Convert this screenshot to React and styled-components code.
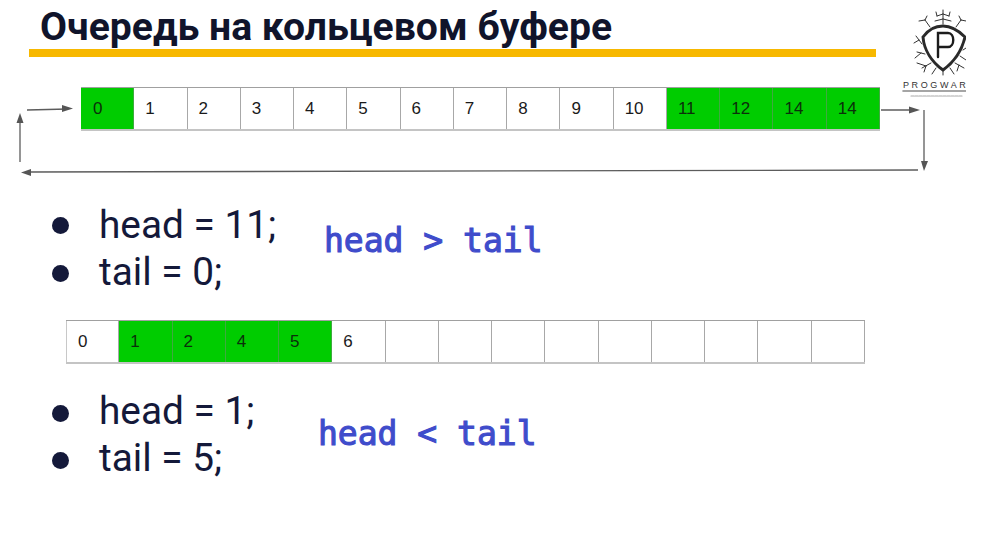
import React from "react";
import styled, { createGlobalStyle } from "styled-components";

const Global = createGlobalStyle`
  html, body { margin: 0; padding: 0; background: #fff; }
  #root { width: 1000px; height: 550px; overflow: hidden; }
`;

const Page = styled.div`
  position: relative;
  width: 1000px;
  height: 550px;
  background: #fff;
  display: flex;
  flex-direction: column;
  box-sizing: border-box;
  padding-top: 6px;
  color: #14193a;
  font-family: Roboto, "Noto Sans", sans-serif;
`;

const Title = styled.h1`
  margin: 0 0 0 40px;
  height: 43px;
  line-height: 43px;
  font-size: 39.15px;
  font-weight: 700;
  color: #10142b;
  white-space: nowrap;
`;

const Rule = styled.div`
  margin-left: 29px;
  width: 847px;
  height: 8px;
  background: #f7b800;
`;

const Buffer = styled.div`
  display: grid;
  grid-template-columns: repeat(15, 1fr);
  width: 799px;
  height: 44px;
  box-sizing: border-box;
  margin-left: ${(p) => p.$left}px;
  margin-top: ${(p) => p.$top}px;
  border-top: 1px solid #a0a0a0;
  border-bottom: 2px solid #c4c4c4;
`;

const Cell = styled.div`
  display: flex;
  align-items: center;
  padding-left: 11px;
  box-sizing: border-box;
  background: ${(p) => (p.$on ? "#00cc00" : "#fff")};
  border-right: 1px solid ${(p) => (p.$on ? "#3faa3f" : "#a8a8a8")};
  &:first-child {
    border-left: 1px solid ${(p) => (p.$on ? "#00cc00" : "#c8c8c8")};
  }
  font-family: "Liberation Sans", Arial, sans-serif;
  font-size: 17px;
  color: ${(p) => (p.$on ? "#0b2f0b" : "#1a1a1a")};
`;

const Row = styled.div`
  display: flex;
  align-items: flex-start;
  margin-top: ${(p) => p.$top}px;
`;

const Vars = styled.ul`
  list-style: none;
  margin: 0 0 0 52px;
  padding: 0;
  width: ${(p) => p.$width}px;
  flex: none;
`;

const Var = styled.li`
  display: flex;
  align-items: center;
  height: 47px;
  font-size: 38.8px;
  font-weight: 400;
  color: #14193a;
  white-space: nowrap;
  &::before {
    content: "";
    width: 17px;
    height: 17px;
    border-radius: 50%;
    background: #14193a;
    margin-right: 30px;
    flex: none;
    transform: translateY(${(p) => p.$drop}px);
  }
`;

const Compare = styled.div`
  margin-top: ${(p) => p.$top}px;
  font-family: "DejaVu Sans Mono", monospace;
  font-size: 33px;
  font-weight: 400;
  -webkit-text-stroke: 1.1px #3f4ccb;
  line-height: 40px;
  color: #3f4ccb;
  white-space: pre;
`;

const Overlay = styled.svg`
  position: absolute;
  left: 0;
  top: 0;
  pointer-events: none;
`;

const LogoText = styled.div`
  position: absolute;
  left: 903px;
  top: 80px;
  font-family: "Liberation Sans", Arial, sans-serif;
  font-size: 9px;
  letter-spacing: 2.6px;
  line-height: 10px;
  color: #333;
  white-space: nowrap;
`;

const first = [0,1,2,3,4,5,6,7,8,9,10,11,12,14,14];
const second = [0,1,2,4,5,6,"","","","","","","","",""];

function Logo() {
  return (
    <Overlay width="966" height="105" viewBox="0 0 966 105" fill="none" stroke="#333" strokeLinecap="round">
      <path d="M943 26C934 26 928 30 923 37C924 50 932 62 943 70C954 62 962 50 965 37C958 30 952 26 943 26Z" strokeWidth="3" stroke="#2a2a2a"/>
      <path d="M938 57V33H948C955 33 955 47 948 47H939" strokeWidth="2.4" stroke="#1c1c1c"/>
      <path d="M943 10V24M943 14L937 16M943 14L949 16M943 19L935 21M943 19L951 21M937 16L936 12M949 16L950 12" strokeWidth="1"/>
      <path d="M930 27L925 20M925 20L919 21M925 20L927 16M956 27L961 20M961 20L966 21M961 20L959 16" strokeWidth="1"/>
      <path d="M922 44L916 36M919 40L914 43M925 54L917 52M921 53L915 58M931 63L922 68M926 66L917 63M926 66L924 72M936 68L932 74" strokeWidth="1"/>
      <path d="M963 50L966 48M960 56L966 60M955 63L964 68M959 65L957 71M950 68L954 74M943 71V75" strokeWidth="1"/>
      <path d="M903 91H966" stroke="#888" strokeWidth="1.6"/>
      <path d="M911 96H962" stroke="#aaa" strokeWidth="1.2" strokeDasharray="3 1"/>
    </Overlay>
  );
}

function Arrows() {
  return (
    <Overlay width="1000" height="550" viewBox="0 0 1000 550" fill="none">
      <g stroke="#5c5c5c" strokeWidth="1.3">
        <path d="M27 110L68 109"/>
        <path d="M20 162V118"/>
        <path d="M918 170L28 172"/>
        <path d="M881 110H915"/>
        <path d="M924 110V165"/>
      </g>
      <g fill="#555">
        <path d="M73 108.500L62 105V112Z"/>
        <path d="M20 113L16.500 123H23.500Z"/>
        <path d="M21 172.500L31 169V176Z"/>
        <path d="M920 110L909 106.500V113.500Z"/>
        <path d="M924 171L921 161H928Z"/>
      </g>
    </Overlay>
  );
}

export default function App() {
  return (
    <Page>
      <Global />
      <Title>Очередь на кольцевом буфере</Title>
      <Rule />
      <Buffer $left={81} $top={30}>
        {first.map((n, i) => (
          <Cell key={i} $on={i === 0 || i > 10}>{n}</Cell>
        ))}
      </Buffer>
      <Row $top={70}>
        <Vars $width={272}>
          <Var $drop={1}>head = 11;</Var>
          <Var $drop={2}>tail = 0;</Var>
        </Vars>
        <Compare $top={20}>head &gt; tail</Compare>
      </Row>
      <Buffer $left={66} $top={25}>
        {second.map((n, i) => (
          <Cell key={i} $on={i >= 1 && i <= 4}>{n}</Cell>
        ))}
      </Buffer>
      <Row $top={23}>
        <Vars $width={266}>
          <Var $drop={3}>head = 1;</Var>
          <Var $drop={3}>tail = 5;</Var>
        </Vars>
        <Compare $top={27}>head &lt; tail</Compare>
      </Row>
      <Arrows />
      <Logo />
      <LogoText>PROGWAR</LogoText>
    </Page>
  );
}
